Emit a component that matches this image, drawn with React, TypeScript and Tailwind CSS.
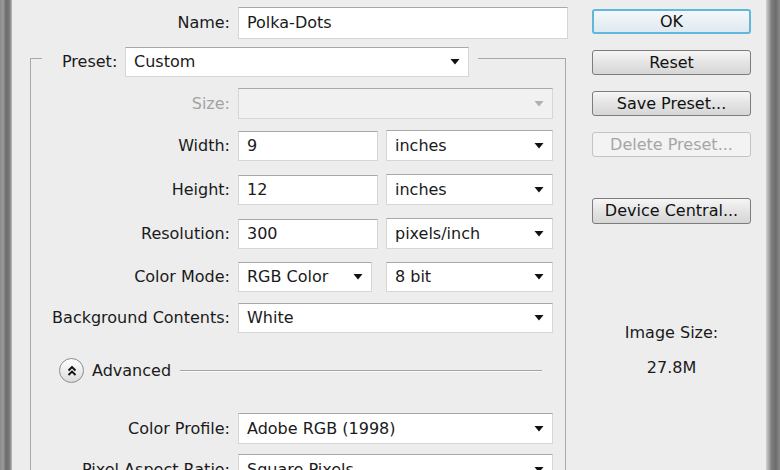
import React from "react";

function Arrow({ disabled }: { disabled?: boolean }) {
  return (
    <svg width="10" height="6" viewBox="0 0 10 6" className="shrink-0">
      <polygon points="0.5,0 9.5,0 5,5.5" fill={disabled ? "#b0b0b0" : "#111111"} />
    </svg>
  );
}

function Dropdown({
  value,
  className,
  disabled,
}: {
  value: string;
  className: string;
  disabled?: boolean;
}) {
  return (
    <div
      className={
        "flex items-center justify-between pl-[8px] pr-[8px] border border-[#d6d6d6] border-t-[#a8a8a8] " +
        (disabled ? "bg-[#f1f1f1] " : "bg-white ") +
        className
      }
    >
      <span className="whitespace-nowrap">{value}</span>
      <Arrow disabled={disabled} />
    </div>
  );
}

function TextInput({ value, className }: { value: string; className: string }) {
  return (
    <div
      className={
        "flex items-center pl-[8px] bg-white border border-[#d6d6d6] border-t-[#a8a8a8] " +
        className
      }
    >
      {value}
    </div>
  );
}

function Label({ text, muted }: { text: string; muted?: boolean }) {
  return (
    <div
      className={
        "w-[199px] text-right whitespace-nowrap " +
        (muted ? "text-[#a3a3a3]" : "text-[#1a1a1a]")
      }
    >
      {text}
    </div>
  );
}

function Button({
  text,
  className,
  variant,
}: {
  text: string;
  className: string;
  variant?: "default" | "primary" | "disabled";
}) {
  const v =
    variant === "primary"
      ? "border-2 border-[#5fb8dc] bg-[linear-gradient(to_bottom,#f3f8fb,#dfe9ef)] text-[#111]"
      : variant === "disabled"
      ? "border border-[#c4c4c4] bg-[#f3f3f3] text-[#a6a6a6]"
      : "border border-[#7c7c7c] bg-[linear-gradient(to_bottom,#f6f6f6,#e4e4e4_50%,#d6d6d6)] text-[#111]";
  return (
    <div
      className={
        "flex items-center justify-center rounded-[3px] w-[159px] leading-none " +
        v +
        " " +
        className
      }
    >
      {text}
    </div>
  );
}

export default function App() {
  return (
    <div className="flex h-[470px] w-[780px] overflow-hidden bg-[#ededed] text-[16px] text-[#1a1a1a] font-['DejaVu_Sans',sans-serif]">
      <div className="w-[12px] shrink-0 bg-[linear-gradient(to_right,#8a8a8a,#9c9c9c_25%,#6b6b6b_50%,#7c7c7c_80%,#bdbdbd)]" />

      {/* form column */}
      <div className="w-[556px] shrink-0 flex flex-col">
        <div className="flex items-center pt-[7px]">
          <div className="w-[218px] text-right">Name:</div>
          <TextInput value="Polka-Dots" className="ml-[8px] w-[330px] h-[32px]" />
        </div>

        <fieldset className="ml-[18px] w-[536px] border border-b-0 border-[#a9a9a9] m-0 p-0 min-w-0">
          <legend className="ml-[11px] pl-[20px] pr-[9px] pt-[8px] pb-0 flex items-center">
            <span className="w-[56px] whitespace-nowrap">Preset:</span>
            <Dropdown value="Custom" className="ml-[7px] w-[344px] h-[30px]" />
          </legend>

          <div className="flex items-center mt-[11px]">
            <Label text="Size:" muted />
            <Dropdown value="" disabled className="ml-[8px] w-[315px] h-[31px]" />
          </div>

          <div className="flex items-center mt-[11px]">
            <Label text="Width:" />
            <TextInput value="9" className="ml-[8px] w-[140px] h-[30px]" />
            <Dropdown value="inches" className="ml-[8px] w-[167px] h-[31px]" />
          </div>

          <div className="flex items-center mt-[13px]">
            <Label text="Height:" />
            <TextInput value="12" className="ml-[8px] w-[140px] h-[30px]" />
            <Dropdown value="inches" className="ml-[8px] w-[167px] h-[31px]" />
          </div>

          <div className="flex items-center mt-[13px]">
            <Label text="Resolution:" />
            <TextInput value="300" className="ml-[8px] w-[140px] h-[30px]" />
            <Dropdown value="pixels/inch" className="ml-[8px] w-[167px] h-[31px]" />
          </div>

          <div className="flex items-center mt-[13px]">
            <Label text="Color Mode:" />
            <Dropdown value="RGB Color" className="ml-[8px] w-[134px] h-[30px]" />
            <Dropdown value="8 bit" className="ml-[14px] w-[167px] h-[30px]" />
          </div>

          <div className="flex items-center mt-[11px]">
            <Label text="Background Contents:" />
            <Dropdown value="White" className="ml-[8px] w-[315px] h-[30px]" />
          </div>

          <div className="flex items-center mt-[25px] pl-[28px]">
            <div className="w-[25px] h-[25px] rounded-full border border-[#8c8c8c] bg-[linear-gradient(to_bottom,#ffffff,#dcdcdc)] flex items-center justify-center">
              <svg width="12" height="12" viewBox="0 0 12 12">
                <polyline points="2.5,5.5 6,2 9.5,5.5" fill="none" stroke="#111" strokeWidth="1.9" />
                <polyline points="2.5,10 6,6.5 9.5,10" fill="none" stroke="#111" strokeWidth="1.9" />
              </svg>
            </div>
            <span className="ml-[8px] whitespace-nowrap">Advanced</span>
            <div className="ml-[9px] w-[362px] border-t border-t-[#a3a3a3] border-b border-b-[#fafafa]" />
          </div>

          <div className="flex items-center mt-[30px]">
            <Label text="Color Profile:" />
            <Dropdown value="Adobe RGB (1998)" className="ml-[8px] w-[315px] h-[31px]" />
          </div>

          <div className="flex items-center mt-[10px]">
            <Label text="Pixel Aspect Ratio:" />
            <Dropdown value="Square Pixels" className="ml-[8px] w-[315px] h-[31px]" />
          </div>
        </fieldset>
      </div>

      {/* buttons column */}
      <div className="ml-[24px] w-[159px] shrink-0 flex flex-col items-center">
        <Button text="OK" variant="primary" className="mt-[9px] h-[25px]" />
        <Button text="Reset" className="mt-[16px] h-[25px]" />
        <Button text="Save Preset..." className="mt-[16px] h-[25px]" />
        <Button text="Delete Preset..." variant="disabled" className="mt-[16px] h-[25px]" />
        <Button text="Device Central..." className="mt-[41px] h-[26px]" />
        <div className="mt-[99px] leading-[20px] h-[20px]">Image Size:</div>
        <div className="mt-[15px] leading-[20px] h-[20px]">27.8M</div>
      </div>

      <div className="w-[15px] shrink-0" />
      <div className="w-[14px] shrink-0 bg-[linear-gradient(to_right,#d2d2d2,#a8a8a8_20%,#7c7c7c_40%,#6c6c6c_70%,#8a8a8a)]" />
    </div>
  );
}
